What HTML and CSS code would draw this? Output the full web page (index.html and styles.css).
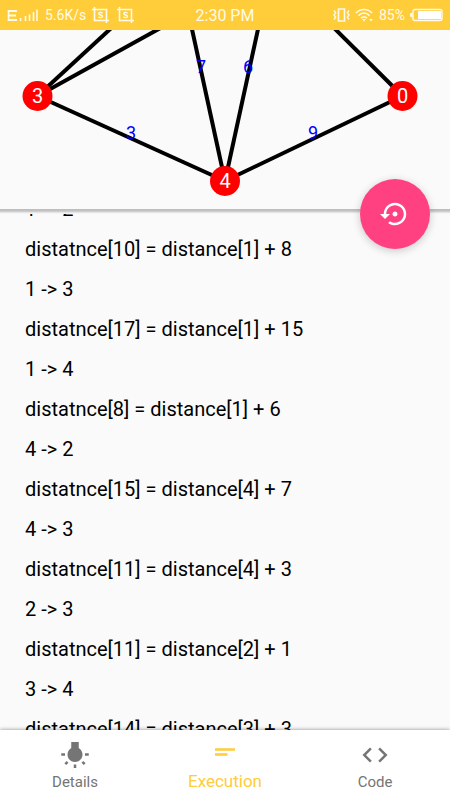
FILE: index.html
```html
<!DOCTYPE html>
<html lang="en">
<head>
<meta charset="utf-8">
<meta name="viewport" content="width=device-width, initial-scale=1">
<title>Execution</title>
<link rel="stylesheet" href="styles.css">
</head>
<body>
<header class="status">
  <div class="status-side">
    <svg width="32" height="14" viewBox="0 0 32 14" aria-hidden="true">
      <path d="M10 3H1.500v9H10M1.500 7.500H9" fill="none" stroke="currentColor" stroke-width="1.800"/>
      <path d="M13.500 10v3M18.500 8v5M22.500 6.500v6.500M26.500 4v9M30 1.500v11.500" fill="none" stroke="currentColor" stroke-width="1.600"/>
    </svg>
    <span class="small">5.6K/s</span>
    <svg class="crop" width="17" height="16" viewBox="0 0 17 16" aria-hidden="true">
      <path d="M0 2.500h14.500V16M2.500 0v13.500H17" fill="none" stroke="currentColor" stroke-width="1.600"/>
      <path d="M10.500 6.200C9.500 5 6.700 5.200 6.700 6.700c0 1.600 3.800 1 3.800 2.700 0 1.500-2.900 1.700-4 .4" fill="none" stroke="currentColor" stroke-width="1.400"/>
    </svg>
    <svg class="crop" width="17" height="16" viewBox="0 0 17 16" aria-hidden="true">
      <path d="M0 2.500h14.500V16M2.500 0v13.500H17" fill="none" stroke="currentColor" stroke-width="1.600"/>
      <path d="M10.500 6.200C9.500 5 6.700 5.200 6.700 6.700c0 1.600 3.800 1 3.800 2.700 0 1.500-2.900 1.700-4 .4" fill="none" stroke="currentColor" stroke-width="1.400"/>
    </svg>
  </div>
  <time class="clock">2:30 PM</time>
  <div class="status-side status-end">
    <svg width="17" height="16" viewBox="0 0 17 16" aria-hidden="true">
      <path d="M5.500 2h6v12h-6z" fill="none" stroke="currentColor" stroke-width="1.600"/>
      <path d="M1 3.500l1.700 2.300L1 8l1.700 2.200L1 12.500M16 3.500l-1.700 2.300L16 8l-1.700 2.200 1.700 2.300" fill="none" stroke="currentColor" stroke-width="1.400"/>
    </svg>
    <svg width="19" height="14" viewBox="0 0 19 14" aria-hidden="true">
      <path d="M1 5C5.500.300 12.500.300 17 5M3.500 7.600c3.300-3.200 7.700-3.200 11 0M6 10.200c2-1.800 4-1.800 6 0" fill="none" stroke="currentColor" stroke-width="1.700"/>
      <path d="M7 11h4l-2 2.500zM14 11h4l-2 2.500z" fill="currentColor"/>
    </svg>
    <span class="small">85%</span>
    <svg width="33" height="14" viewBox="0 0 33 14" aria-hidden="true">
      <rect x="3" y="1.500" width="29" height="11" rx="2" fill="none" stroke="currentColor" stroke-width="1.400"/>
      <path d="M0 5.500l2.500-1v5L0 8.500z" fill="currentColor"/>
      <path d="M8 3h23v8H8z" fill="#fff"/>
    </svg>
  </div>
</header>

<main class="screen">
  <section class="graph">
    <svg viewBox="0 0 450 179" role="img" aria-label="Weighted graph">
      <g class="edges">
        <path d="M37.500 66L120 -10"/>
        <path d="M37.500 66L175 -10"/>
        <path d="M37.500 66L225 151"/>
        <path d="M225 151L190 -10"/>
        <path d="M225 151L260 -10"/>
        <path d="M225 151L402.500 66"/>
        <path d="M402.500 66L326 -10"/>
      </g>
      <g class="weights">
        <text x="201" y="43">7</text>
        <text x="248" y="43">6</text>
        <text x="131" y="109">3</text>
        <text x="313" y="109">9</text>
      </g>
      <g class="nodes">
        <circle cx="37.500" cy="66" r="15"/>
        <circle cx="225" cy="151" r="15"/>
        <circle cx="402.500" cy="66" r="15"/>
        <text x="37.500" y="73">3</text>
        <text x="225" y="158">4</text>
        <text x="402.500" y="73">0</text>
      </g>
    </svg>
  </section>

  <section class="log">
    <button class="fab" type="button" aria-label="Restart">
      <svg width="30" height="30" viewBox="0 0 24 24" fill="currentColor" aria-hidden="true"><path d="M14 12c0-1.100-.9-2-2-2s-2 .9-2 2 .9 2 2 2 2-.9 2-2zm-2-9c-4.970 0-9 4.030-9 9H0l4 4 4-4H5c0-3.870 3.130-7 7-7s7 3.130 7 7-3.130 7-7 7c-1.510 0-2.910-.49-4.060-1.300l-1.420 1.440C8.040 20.300 9.940 21 12 21c4.970 0 9-4.030 9-9s-4.030-9-9-9z"/></svg>
    </button>
    <div class="log-view">
      <ul class="steps">
        <li>1 -&gt; 2</li>
        <li>distatnce[10] = distance[1] + 8</li>
        <li>1 -&gt; 3</li>
        <li>distatnce[17] = distance[1] + 15</li>
        <li>1 -&gt; 4</li>
        <li>distatnce[8] = distance[1] + 6</li>
        <li>4 -&gt; 2</li>
        <li>distatnce[15] = distance[4] + 7</li>
        <li>4 -&gt; 3</li>
        <li>distatnce[11] = distance[4] + 3</li>
        <li>2 -&gt; 3</li>
        <li>distatnce[11] = distance[2] + 1</li>
        <li>3 -&gt; 4</li>
        <li>distatnce[14] = distance[3] + 3</li>
      </ul>
    </div>
  </section>
</main>

<nav class="tabs">
  <a class="tab" href="#details">
    <svg width="30" height="30" viewBox="0 0 24 24" fill="currentColor" aria-hidden="true"><path d="M3.550 18.540l1.410 1.410 1.800-1.790-1.410-1.410-1.800 1.790zM11 22.450h2V19.500h-2v2.950zM4 10.500H1v2h3v-2zm11-4.190V1.500H9v4.810C7.210 7.350 6 9.280 6 11.500c0 3.310 2.690 6 6 6s6-2.690 6-6c0-2.220-1.210-4.150-3-5.190zm5 4.190v2h3v-2h-3zm-2.760 7.660l1.790 1.800 1.410-1.410-1.800-1.790-1.400 1.400z"/></svg>
    <span>Details</span>
  </a>
  <a class="tab active" href="#execution" aria-current="page">
    <svg width="30" height="30" viewBox="0 0 24 24" fill="currentColor" aria-hidden="true"><path d="M4 9h16v2H4V9zm0 4h10v2H4v-2z"/></svg>
    <span>Execution</span>
  </a>
  <a class="tab" href="#code">
    <svg width="30" height="30" viewBox="0 0 24 24" fill="currentColor" aria-hidden="true"><path d="M9.400 16.600L4.800 12l4.600-4.600L8 6l-6 6 6 6 1.400-1.400zm5.200 0l4.600-4.600-4.600-4.600L16 6l6 6-6 6-1.400-1.400z"/></svg>
    <span>Code</span>
  </a>
</nav>
</body>
</html>
```

FILE: styles.css
```css
* {
  box-sizing: border-box;
}

body {
  margin: 0;
  height: 100vh;
  display: flex;
  flex-direction: column;
  overflow: hidden;
  background: #fafafa;
  color: #000;
  font-family: Roboto, "Liberation Sans", sans-serif;
}

svg {
  display: block;
  flex: none;
}

.status {
  display: grid;
  grid-template-columns: 1fr auto 1fr;
  align-items: center;
  height: 30px;
  padding: 0 7px;
  background: #ffcc3a;
  color: #fffbe8;
}

.status-side {
  display: flex;
  align-items: center;
  gap: 6px;
}

.status-end {
  justify-content: flex-end;
  gap: 5px;
}

.small {
  font-size: 14px;
}

.crop + .crop {
  margin-left: 2px;
}

.clock {
  font-size: 16px;
}

.screen {
  flex: 1;
  min-height: 0;
  display: flex;
  flex-direction: column;
}

.graph {
  flex: none;
  overflow: hidden;
}

.graph svg {
  width: 100%;
}

.edges {
  fill: none;
  stroke: #000;
  stroke-width: 4;
}

.weights {
  fill: #00f;
  font-size: 18px;
  text-anchor: middle;
}

.nodes {
  fill: #f00;
  font-size: 20px;
  text-anchor: middle;
}

.nodes text {
  fill: #fff;
}

.log {
  flex: 1;
  min-height: 0;
  position: relative;
  display: flex;
  flex-direction: column;
  border-top: 5px solid transparent;
  background: linear-gradient(#bcbcbc, #c4c4c4 2px, #f0f0f0 4px, #fafafa 5px) border-box;
}

.log-view {
  flex: 1;
  min-height: 0;
  overflow: hidden;
}

.steps {
  list-style: none;
  margin: -25px 0 0;
  padding: 0 25px;
  font-size: 20px;
  line-height: 40px;
}

.fab {
  position: absolute;
  top: -35px;
  right: 20px;
  display: flex;
  align-items: center;
  justify-content: center;
  width: 70px;
  height: 70px;
  padding: 0;
  border: 0;
  border-radius: 50%;
  background: #ff4081;
  color: #fff;
  box-shadow: 0 2px 8px rgba(0, 0, 0, 0.2);
}

.tabs {
  position: relative;
  flex: none;
  display: grid;
  grid-template-columns: repeat(3, 1fr);
  height: 70px;
  background: #fff;
  box-shadow: 0 0 4px rgba(0, 0, 0, 0.45);
}

.tab {
  display: flex;
  flex-direction: column;
  align-items: center;
  padding-top: 10px;
  color: #757575;
  font-size: 15px;
  line-height: 24px;
  text-decoration: none;
}

.tab.active {
  padding-top: 7px;
  color: #ffcc3a;
  font-size: 17px;
  line-height: 29px;
}
```
